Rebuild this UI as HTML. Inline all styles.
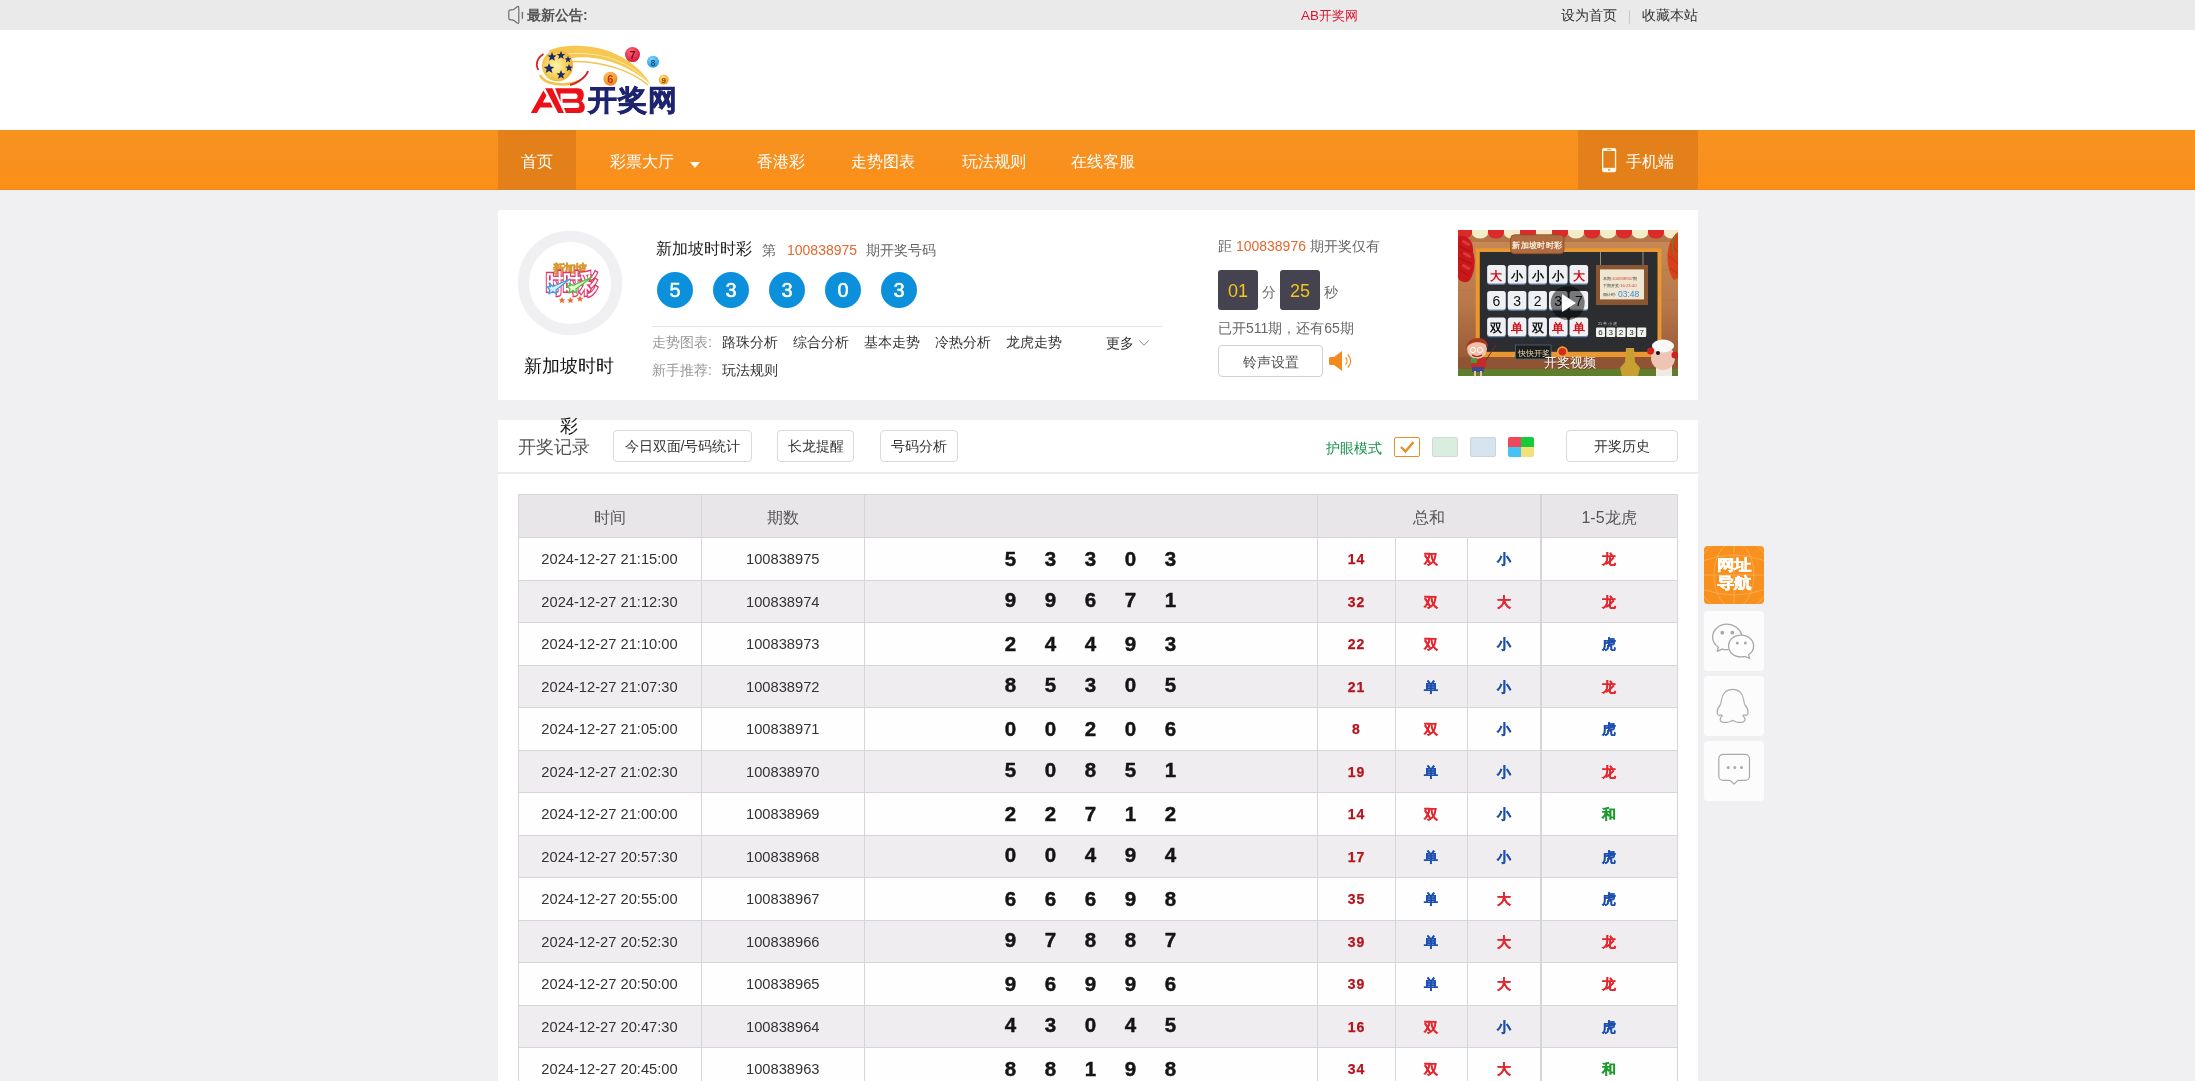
<!DOCTYPE html>
<html><head><meta charset="utf-8">
<style>
*{margin:0;padding:0;box-sizing:border-box}
html,body{width:2195px;height:1081px;overflow:hidden}
body{position:relative;background:#f0eff2;font-family:"Liberation Sans",sans-serif;color:#333;font-size:14px}
.a{position:absolute;white-space:nowrap}
.nv{color:#fff;font-size:16px;line-height:63px;top:0}
.btn{position:absolute;border:1px solid #d9d9d9;border-radius:4px;background:#fff;color:#333;text-align:center;font-size:14px}
.lbl{color:#999;font-size:14px}
.lnk{color:#333;font-size:14px}
.th{top:494px;height:43px;line-height:47px;text-align:center;font-size:16px;color:#555}
.td{height:42px;line-height:42px;text-align:center;font-size:14.7px;color:#333}
.tn{height:42px;line-height:42px;font-size:20.5px;font-weight:bold;color:#151515;width:24px;text-align:center;-webkit-text-stroke:0.45px #151515}
.ts{height:42px;line-height:42px;text-align:center;font-size:14px;font-weight:bold;-webkit-text-stroke:0.25px currentColor}
.tsn{letter-spacing:1px;text-indent:1px}
.sb{position:absolute;left:1704px;width:60px;height:60px;border-radius:4px;background:#fcfcfc}
#root{position:absolute;left:0;top:0;width:2195px;height:1081px;overflow:hidden;will-change:transform}

</style></head><body>
<div id="root">
<!-- top bar -->
<div class="a" style="left:0;top:0;width:2195px;height:30px;background:#eaeaea"></div>
<svg class="a" style="left:500px;top:1.2px" width="30" height="30" viewBox="0 0 30 30">
  <path d="M8.8 10.8 Q8.8 8.9 10.8 8.9 L12 8.9 Q13 8.9 14 8.2 L17.2 5.8 Q18.8 4.8 18.8 6.5 L18.8 21.3 Q18.8 23 17.2 22 L14 19.6 Q13 18.9 12 18.9 L10.8 18.9 Q8.8 18.9 8.8 17 Z" fill="none" stroke="#6e6e6e" stroke-width="1.2" stroke-linejoin="round"/>
  <path d="M22.4 11.3 L22.4 17.3" stroke="#6e6e6e" stroke-width="1.3" stroke-linecap="round"/>
</svg>
<div class="a" style="left:527px;top:0;line-height:30px;font-size:14px;font-weight:bold;color:#555">最新公告:</div>
<div class="a" style="left:1301px;top:0;line-height:31px;font-size:13.4px;color:#dc1430">AB开奖网</div>
<div class="a" style="left:1561px;top:0;line-height:31px;font-size:14px;color:#333">设为首页</div>
<div class="a" style="left:1629px;top:10px;width:1px;height:14px;background:#c8c8c8"></div>
<div class="a" style="left:1642px;top:0;line-height:31px;font-size:14px;color:#333">收藏本站</div>

<!-- header -->
<div class="a" style="left:0;top:30px;width:2195px;height:100px;background:#fff"></div>
<svg class="a" style="left:520px;top:35px" width="170" height="90" viewBox="0 0 170 90">
  <defs>
    <radialGradient id="gb" cx="0.45" cy="0.5" r="0.6">
      <stop offset="0" stop-color="#fff6b0"/><stop offset="0.6" stop-color="#f7cf55"/><stop offset="1" stop-color="#eaa62a"/>
    </radialGradient>
    <radialGradient id="rb" cx="0.4" cy="0.3" r="0.7"><stop offset="0" stop-color="#ff6a7a"/><stop offset="1" stop-color="#d41a3a"/></radialGradient>
    <radialGradient id="bb" cx="0.4" cy="0.3" r="0.7"><stop offset="0" stop-color="#7fd8ff"/><stop offset="1" stop-color="#1e9ee0"/></radialGradient>
    <radialGradient id="ob" cx="0.4" cy="0.3" r="0.7"><stop offset="0" stop-color="#ffc060"/><stop offset="1" stop-color="#ee8a1a"/></radialGradient>
    <radialGradient id="yb" cx="0.4" cy="0.3" r="0.7"><stop offset="0" stop-color="#ffe07a"/><stop offset="1" stop-color="#eea020"/></radialGradient>
  </defs>
  <!-- swooshes -->
  <path d="M28 16 C40 10 62 9 82 14 C104 20 122 34 131 50 C118 38 100 28 80 24 C64 21 50 22 42 26 C38 22 33 18 28 16 Z" fill="#f6c852"/>
  <path d="M44 27 C80 24 112 36 128 50" fill="none" stroke="#f3c24a" stroke-width="1.3"/><path d="M40 20 C78 14 110 26 130 49" fill="none" stroke="#fbe9a8" stroke-width="0.9"/>
  <path d="M20 40 C24 50 45 52 60 46" fill="none" stroke="#f3c24a" stroke-width="2.5"/>
  <path d="M23.5 19 C17 23 15 30 18.5 35" fill="none" stroke="#d8202a" stroke-width="1.8"/>
  <path d="M68 36 C66 42 58 48 50 50" fill="none" stroke="#d8202a" stroke-width="2"/>
  <circle cx="37.5" cy="30.8" r="15.5" fill="url(#gb)"/>
  <g fill="#1d2a6a">
    <path d="M32 17 l1.3 3.2 3.3 .2 -2.6 2.1 .9 3.3 -2.9-1.9 -2.9 1.9 .9-3.3 -2.6-2.1 3.3-.2z"/>
    <path d="M41 16 l1.2 2.9 3 .2 -2.3 1.9 .8 3 -2.7-1.7 -2.7 1.7 .8-3 -2.3-1.9 3-.2z"/>
    <path d="M48 21 l1 2.3 2.4 .2 -1.9 1.5 .7 2.4 -2.2-1.4 -2.2 1.4 .7-2.4 -1.9-1.5 2.4-.2z"/>
    <path d="M29 28 l1.5 3.6 3.8 .3 -2.9 2.4 1 3.7 -3.4-2.1 -3.3 2.1 1-3.7 -2.9-2.4 3.8-.3z"/>
    <path d="M49 29 l1.1 2.6 2.7 .2 -2.1 1.7 .7 2.7 -2.4-1.5 -2.4 1.5 .7-2.7 -2.1-1.7 2.7-.2z"/>
    <path d="M41 35 l1.3 3.2 3.3 .2 -2.6 2.1 .9 3.3 -2.9-1.9 -2.9 1.9 .9-3.3 -2.6-2.1 3.3-.2z"/>
  </g>
  <circle cx="112.5" cy="19.6" r="7.5" fill="url(#rb)"/>
  <text x="112.5" y="24" font-size="11" font-weight="bold" fill="#7a0a1a" text-anchor="middle" font-family="Liberation Sans">7</text>
  <circle cx="133" cy="26.7" r="6" fill="url(#bb)"/>
  <text x="133" y="30.5" font-size="9" font-weight="bold" fill="#0b4f8a" text-anchor="middle" font-family="Liberation Sans">8</text>
  <circle cx="90.4" cy="43.7" r="7" fill="url(#ob)"/>
  <text x="90.4" y="48" font-size="11" font-weight="bold" fill="#c02a10" text-anchor="middle" font-family="Liberation Sans">6</text>
  <circle cx="143.7" cy="44.6" r="5" fill="url(#yb)"/>
  <text x="143.7" y="48" font-size="8" font-weight="bold" fill="#8a3a00" text-anchor="middle" font-family="Liberation Sans">9</text>
  <g transform="translate(5,47) scale(0.03416)" fill="#ee1018">
    <path d="M170 910 L350 910 L440 750 L810 750 L740 600 L520 600 L630 400 L540 250 Z"/>
    <path d="M590 180 L800 180 L1140 910 L970 910 Z"/>
    <path d="M880 180 L1540 180 C1700 180 1730 300 1720 400 C1710 480 1680 540 1650 560 C1720 600 1760 680 1750 760 C1740 850 1680 910 1580 910 L1200 910 L1140 760 L1520 760 C1580 760 1590 720 1590 680 C1590 640 1570 610 1520 610 L1100 610 L1100 500 L1470 500 C1520 500 1540 470 1540 420 C1540 370 1510 340 1470 340 L1040 340 L1040 580 Z"/>
  </g>
  <text x="67.5" y="75" font-size="29" font-weight="bold" fill="#1f2470" stroke="#1f2470" stroke-width="0.7" letter-spacing="1.2">开奖网</text>
</svg>

<!-- nav -->
<div class="a" style="left:0;top:130px;width:2195px;height:60px;background:linear-gradient(#f7921f,#f8901e 50%,#fd8f16)"></div><div class="a" style="left:0;top:189px;width:2195px;height:1px;background:#e68c28"></div>
<div class="a" style="left:498px;top:130px;width:78px;height:60px;background:#e4801a"></div>
<div class="a" style="left:1578px;top:130px;width:120px;height:60px;background:#e4801a"></div>
<div class="a" style="left:0;top:130px;width:2195px;height:60px">
  <div class="a nv" style="left:521px">首页</div>
  <div class="a nv" style="left:610px">彩票大厅</div>
  <div class="a" style="left:690px;top:32px;width:0;height:0;border-left:5px solid transparent;border-right:5px solid transparent;border-top:6px solid #fff"></div>
  <div class="a nv" style="left:757px">香港彩</div>
  <div class="a nv" style="left:851px">走势图表</div>
  <div class="a nv" style="left:962px">玩法规则</div>
  <div class="a nv" style="left:1071px">在线客服</div>
  <svg class="a" style="left:1602px;top:18px" width="15" height="25" viewBox="0 0 15 25">
    <rect x="0" y="0" width="14.2" height="24.2" rx="2.2" fill="#fff8ec"/>
    <rect x="1.3" y="3" width="11.6" height="16.8" fill="#e4801a"/>
    <rect x="5" y="1.2" width="4.2" height="0.9" fill="#e4801a"/>
    <rect x="6" y="21.2" width="2.2" height="1.3" fill="#e4801a"/>
  </svg>
  <div class="a nv" style="left:1626px">手机端</div>
</div>

<!-- card 1 -->
<div class="a" style="left:498px;top:210px;width:1200px;height:190px;background:#fff"></div>
<div class="a" style="left:518px;top:230.5px;width:104px;height:104px;border-radius:50%;border:11.5px solid #f0eff2;background:#fff;box-shadow:0 0 1.5px #f0eff2"></div>
<svg class="a" style="left:540px;top:258px" width="64" height="48" viewBox="0 0 64 48">
  <text x="12.5" y="15" font-size="11.5" font-weight="bold" fill="#e6602a" stroke="#d89a30" stroke-width="0.6" letter-spacing="-0.8">新加坡</text>
  <g transform="translate(6,34) scale(0.7,1)">
    <text x="0" y="0" font-size="25" font-weight="bold" fill="#fff" stroke="#e3356a" stroke-width="3" letter-spacing="-1">时时彩</text>
    <text x="0" y="0" font-size="25" font-weight="bold" fill="#fff" letter-spacing="-1">时时彩</text>
  </g>
  <path d="M9 25 L13 28.5 L30 21 L16 32 L16.5 36 L13 33.5 L9 36 L10 32 L7 29 L10.5 28.5 Z" fill="#d8f0ff" stroke="#3aa0e8" stroke-width="1.3" stroke-linejoin="round"/>
  <path d="M29 25 L33 27.5 L52 19 L36 31 L36.5 35 L33 32.5 L29 35 L30 31 L27 28 L30.5 27.5 Z" fill="#e0ffd8" stroke="#4cc040" stroke-width="1.3" stroke-linejoin="round"/>
  <g fill="#f06a2a">
    <path d="M22 39 l1 2.2 2.3.2 -1.8 1.5 .6 2.3 -2.1-1.3 -2.1 1.3 .6-2.3 -1.8-1.5 2.3-.2z"/>
    <path d="M30.5 39 l1 2.2 2.3.2 -1.8 1.5 .6 2.3 -2.1-1.3 -2.1 1.3 .6-2.3 -1.8-1.5 2.3-.2z"/>
    <path d="M40 37.5 l1 2.2 2.3.2 -1.8 1.5 .6 2.3 -2.1-1.3 -2.1 1.3 .6-2.3 -1.8-1.5 2.3-.2z"/>
  </g>
</svg>
<div class="a" style="left:524px;top:354px;font-size:18px;line-height:24px;color:#111">新加坡时时</div>
<div class="a" style="left:560px;top:414px;font-size:18px;line-height:24px;color:#111;z-index:5">彩</div>

<div class="a" style="left:656px;top:238px;font-size:16px;line-height:22px;color:#222">新加坡时时彩</div>
<div class="a" style="left:762px;top:239px;font-size:14px;line-height:22px;color:#666">第</div>
<div class="a" style="left:787px;top:239px;font-size:14px;line-height:22px;color:#e3682e">100838975</div>
<div class="a" style="left:866px;top:239px;font-size:14px;line-height:22px;color:#666">期开奖号码</div>

<div class="a" style="left:657px;top:272px;width:36px;height:36px;border-radius:50%;background:#0c90dc;color:#fff;font-size:20px;line-height:37.5px;text-align:center;-webkit-text-stroke:0.5px #fff">5</div>
<div class="a" style="left:713px;top:272px;width:36px;height:36px;border-radius:50%;background:#0c90dc;color:#fff;font-size:20px;line-height:37.5px;text-align:center;-webkit-text-stroke:0.5px #fff">3</div>
<div class="a" style="left:769px;top:272px;width:36px;height:36px;border-radius:50%;background:#0c90dc;color:#fff;font-size:20px;line-height:37.5px;text-align:center;-webkit-text-stroke:0.5px #fff">3</div>
<div class="a" style="left:825px;top:272px;width:36px;height:36px;border-radius:50%;background:#0c90dc;color:#fff;font-size:20px;line-height:37.5px;text-align:center;-webkit-text-stroke:0.5px #fff">0</div>
<div class="a" style="left:881px;top:272px;width:36px;height:36px;border-radius:50%;background:#0c90dc;color:#fff;font-size:20px;line-height:37.5px;text-align:center;-webkit-text-stroke:0.5px #fff">3</div>

<div class="a" style="left:652px;top:326px;width:510px;height:1px;background:#e6e6e6"></div>
<div class="a lbl" style="left:652px;top:331px;line-height:22px">走势图表:</div>
<div class="a lnk" style="left:722px;top:331px;line-height:22px">路珠分析</div>
<div class="a lnk" style="left:793px;top:331px;line-height:22px">综合分析</div>
<div class="a lnk" style="left:864px;top:331px;line-height:22px">基本走势</div>
<div class="a lnk" style="left:935px;top:331px;line-height:22px">冷热分析</div>
<div class="a lnk" style="left:1006px;top:331px;line-height:22px">龙虎走势</div>
<div class="a lnk" style="left:1106px;top:332px;line-height:22px">更多</div>
<svg class="a" style="left:1138px;top:338px" width="12" height="10" viewBox="0 0 12 10"><path d="M1.2 2.3 L6 7.3 L10.8 2.3" fill="none" stroke="#8a8a8a" stroke-width="1"/></svg>
<div class="a lbl" style="left:652px;top:359px;line-height:22px">新手推荐:</div>
<div class="a lnk" style="left:722px;top:359px;line-height:22px">玩法规则</div>

<div class="a" style="left:1218px;top:235px;font-size:14px;line-height:22px;color:#666">距 <span style="color:#e3682e">100838976</span> 期开奖仅有</div>
<div class="a" style="left:1218px;top:270px;width:40px;height:40px;border-radius:3px;background:#45434f;color:#f3c521;font-size:18px;line-height:42px;text-align:center">01</div>
<div class="a" style="left:1262px;top:281px;font-size:14px;line-height:22px;color:#666">分</div>
<div class="a" style="left:1280px;top:270px;width:40px;height:40px;border-radius:3px;background:#45434f;color:#f3c521;font-size:18px;line-height:42px;text-align:center">25</div>
<div class="a" style="left:1324px;top:281px;font-size:14px;line-height:22px;color:#666">秒</div>
<div class="a" style="left:1218px;top:317px;font-size:14px;line-height:22px;color:#666">已开511期，还有65期</div>
<div class="btn" style="left:1218px;top:345px;width:105px;height:32px;line-height:32px;color:#555;border-color:#d0d0d0">铃声设置</div>
<svg class="a" style="left:1328px;top:350px" width="26" height="22" viewBox="0 0 26 22">
  <path d="M1 8.5 Q1 7 2.5 7 L6 7 L14 1 L14 21 L6 15 L2.5 15 Q1 15 1 13.5 Z" fill="#f48a1e"/>
  <path d="M17.5 7.5 C19.5 9.5 19.5 12.5 17.5 14.5" fill="none" stroke="#f48a1e" stroke-width="1.3"/>
  <path d="M19.8 4.5 C23.5 8.5 23.5 13.5 19.8 17.5" fill="none" stroke="#f48a1e" stroke-width="1.3"/>
</svg>

<!-- video thumb -->
<svg class="a" style="left:1458px;top:230px" width="220" height="146" viewBox="0 0 220 146">
  <defs>
    <linearGradient id="wood" x1="0" y1="0" x2="0" y2="1"><stop offset="0" stop-color="#c88c58"/><stop offset="0.5" stop-color="#b8784a"/><stop offset="1" stop-color="#8e5232"/></linearGradient>
  </defs>
  <rect width="220" height="146" fill="url(#wood)"/>
  <g stroke="#a86a40" stroke-width="0.6" opacity="0.6">
    <line x1="0" y1="30" x2="18" y2="30"/><line x1="0" y1="60" x2="18" y2="60"/><line x1="0" y1="90" x2="18" y2="90"/>
    <line x1="203" y1="40" x2="220" y2="40"/><line x1="203" y1="70" x2="220" y2="70"/><line x1="203" y1="100" x2="220" y2="100"/>
  </g>
  <rect x="0" y="6" width="220" height="6" fill="#a8683e" opacity="0.6"/>
  <path d="M-2 0 h16 v3 a8 5.5 0 0 1 -16 0z" fill="#dc2a2a"/>
  <path d="M14 0 h16 v3 a8 5.5 0 0 1 -16 0z" fill="#f4ecc8"/>
  <path d="M30 0 h16 v3 a8 5.5 0 0 1 -16 0z" fill="#dc2a2a"/>
  <path d="M46 0 h16 v3 a8 5.5 0 0 1 -16 0z" fill="#f4ecc8"/>
  <path d="M62 0 h16 v3 a8 5.5 0 0 1 -16 0z" fill="#dc2a2a"/>
  <path d="M78 0 h16 v3 a8 5.5 0 0 1 -16 0z" fill="#f4ecc8"/>
  <path d="M94 0 h16 v3 a8 5.5 0 0 1 -16 0z" fill="#dc2a2a"/>
  <path d="M110 0 h16 v3 a8 5.5 0 0 1 -16 0z" fill="#f4ecc8"/>
  <path d="M126 0 h16 v3 a8 5.5 0 0 1 -16 0z" fill="#dc2a2a"/>
  <path d="M142 0 h16 v3 a8 5.5 0 0 1 -16 0z" fill="#f4ecc8"/>
  <path d="M158 0 h16 v3 a8 5.5 0 0 1 -16 0z" fill="#dc2a2a"/>
  <path d="M174 0 h16 v3 a8 5.5 0 0 1 -16 0z" fill="#f4ecc8"/>
  <path d="M190 0 h16 v3 a8 5.5 0 0 1 -16 0z" fill="#dc2a2a"/>
  <path d="M206 0 h16 v3 a8 5.5 0 0 1 -16 0z" fill="#f4ecc8"/>
  <path d="M222 0 h16 v3 a8 5.5 0 0 1 -16 0z" fill="#dc2a2a"/>
  <path d="M238 0 h16 v3 a8 5.5 0 0 1 -16 0z" fill="#f4ecc8"/>
  <path d="M0 6 C10 4 16 12 15 22 C18 30 17 42 12 50 C8 54 2 52 0 48 Z" fill="#c8181c"/>
  <g stroke="#8a0a10" stroke-width="0.7" fill="none" opacity="0.8">
    <path d="M2 10 L12 16"/><path d="M1 16 L13 22"/><path d="M2 22 L14 28"/><path d="M1 28 L14 34"/><path d="M2 34 L13 40"/><path d="M2 40 L11 46"/>
  </g>
  <g fill="#e8383a" opacity="0.9">
    <ellipse cx="8" cy="13" rx="5" ry="1.6" transform="rotate(30 8 13)"/><ellipse cx="9" cy="25" rx="5" ry="1.6" transform="rotate(30 9 25)"/><ellipse cx="8" cy="37" rx="5" ry="1.6" transform="rotate(30 8 37)"/>
  </g>
  <path d="M220 2 C212 8 208 20 210 34 C211 42 214 48 216 50 L220 48 Z" fill="#d8401c"/>
  <g stroke="#8a2a0a" stroke-width="0.6" opacity="0.7"><path d="M212 14 L220 22"/><path d="M211 26 L220 34"/><path d="M212 38 L220 44"/></g>
  <path d="M218 4 L214 14 L216 24" stroke="#5a8a2a" stroke-width="1.2" fill="none"/>
  <rect x="17.7" y="18.3" width="185.7" height="108.7" fill="#e8982e"/>
  <rect x="21.8" y="22" width="177.7" height="99.8" fill="#2b2d31"/>
  <rect x="52.6" y="4.8" width="53.4" height="18.9" rx="4" fill="#b06c40" stroke="#8a4a28" stroke-width="0.8"/>
  <text x="79.3" y="17.8" font-size="8.2" font-weight="bold" fill="#fbefdc" text-anchor="middle" letter-spacing="0.3">新加坡时时彩</text>
  <rect x="29.2" y="35.8" width="18.5" height="19" rx="2.5" fill="#6a8ab0"/>
  <rect x="29.2" y="35" width="18.5" height="18.5" rx="2.5" fill="#eef0f3"/>
  <text x="38.45" y="49.5" font-size="12" font-weight="bold" fill="#d01018" text-anchor="middle" >大</text>
  <rect x="29.2" y="61.8" width="18.5" height="19" rx="2.5" fill="#6a8ab0"/>
  <rect x="29.2" y="61" width="18.5" height="18.5" rx="2.5" fill="#eef0f3"/>
  <text x="38.45" y="75.5" font-size="14" font-weight="normal" fill="#111" text-anchor="middle" font-family="Liberation Sans">6</text>
  <rect x="29.2" y="88.2" width="18.5" height="19" rx="2.5" fill="#6a8ab0"/>
  <rect x="29.2" y="87.4" width="18.5" height="18.5" rx="2.5" fill="#eef0f3"/>
  <text x="38.45" y="101.9" font-size="12" font-weight="bold" fill="#111" text-anchor="middle" >双</text>
  <rect x="49.8" y="35.8" width="18.5" height="19" rx="2.5" fill="#6a8ab0"/>
  <rect x="49.8" y="35" width="18.5" height="18.5" rx="2.5" fill="#eef0f3"/>
  <text x="59.05" y="49.5" font-size="12" font-weight="bold" fill="#111" text-anchor="middle" >小</text>
  <rect x="49.8" y="61.8" width="18.5" height="19" rx="2.5" fill="#6a8ab0"/>
  <rect x="49.8" y="61" width="18.5" height="18.5" rx="2.5" fill="#eef0f3"/>
  <text x="59.05" y="75.5" font-size="14" font-weight="normal" fill="#111" text-anchor="middle" font-family="Liberation Sans">3</text>
  <rect x="49.8" y="88.2" width="18.5" height="19" rx="2.5" fill="#6a8ab0"/>
  <rect x="49.8" y="87.4" width="18.5" height="18.5" rx="2.5" fill="#eef0f3"/>
  <text x="59.05" y="101.9" font-size="12" font-weight="bold" fill="#d01018" text-anchor="middle" >单</text>
  <rect x="70.4" y="35.8" width="18.5" height="19" rx="2.5" fill="#6a8ab0"/>
  <rect x="70.4" y="35" width="18.5" height="18.5" rx="2.5" fill="#eef0f3"/>
  <text x="79.65" y="49.5" font-size="12" font-weight="bold" fill="#111" text-anchor="middle" >小</text>
  <rect x="70.4" y="61.8" width="18.5" height="19" rx="2.5" fill="#6a8ab0"/>
  <rect x="70.4" y="61" width="18.5" height="18.5" rx="2.5" fill="#eef0f3"/>
  <text x="79.65" y="75.5" font-size="14" font-weight="normal" fill="#111" text-anchor="middle" font-family="Liberation Sans">2</text>
  <rect x="70.4" y="88.2" width="18.5" height="19" rx="2.5" fill="#6a8ab0"/>
  <rect x="70.4" y="87.4" width="18.5" height="18.5" rx="2.5" fill="#eef0f3"/>
  <text x="79.65" y="101.9" font-size="12" font-weight="bold" fill="#111" text-anchor="middle" >双</text>
  <rect x="91" y="35.8" width="18.5" height="19" rx="2.5" fill="#6a8ab0"/>
  <rect x="91" y="35" width="18.5" height="18.5" rx="2.5" fill="#eef0f3"/>
  <text x="100.25" y="49.5" font-size="12" font-weight="bold" fill="#111" text-anchor="middle" >小</text>
  <rect x="91" y="61.8" width="18.5" height="19" rx="2.5" fill="#6a8ab0"/>
  <rect x="91" y="61" width="18.5" height="18.5" rx="2.5" fill="#eef0f3"/>
  <text x="100.25" y="75.5" font-size="14" font-weight="normal" fill="#111" text-anchor="middle" font-family="Liberation Sans">3</text>
  <rect x="91" y="88.2" width="18.5" height="19" rx="2.5" fill="#6a8ab0"/>
  <rect x="91" y="87.4" width="18.5" height="18.5" rx="2.5" fill="#eef0f3"/>
  <text x="100.25" y="101.9" font-size="12" font-weight="bold" fill="#d01018" text-anchor="middle" >单</text>
  <rect x="111.6" y="35.8" width="18.5" height="19" rx="2.5" fill="#6a8ab0"/>
  <rect x="111.6" y="35" width="18.5" height="18.5" rx="2.5" fill="#eef0f3"/>
  <text x="120.85" y="49.5" font-size="12" font-weight="bold" fill="#d01018" text-anchor="middle" >大</text>
  <rect x="111.6" y="61.8" width="18.5" height="19" rx="2.5" fill="#6a8ab0"/>
  <rect x="111.6" y="61" width="18.5" height="18.5" rx="2.5" fill="#eef0f3"/>
  <text x="120.85" y="75.5" font-size="14" font-weight="normal" fill="#111" text-anchor="middle" font-family="Liberation Sans">7</text>
  <rect x="111.6" y="88.2" width="18.5" height="19" rx="2.5" fill="#6a8ab0"/>
  <rect x="111.6" y="87.4" width="18.5" height="18.5" rx="2.5" fill="#eef0f3"/>
  <text x="120.85" y="101.9" font-size="12" font-weight="bold" fill="#d01018" text-anchor="middle" >单</text>
  <line x1="142.5" y1="22" x2="142.5" y2="36" stroke="#b8a888" stroke-width="0.8"/>
  <line x1="185" y1="22" x2="185" y2="36" stroke="#b8a888" stroke-width="0.8"/>
  <rect x="138" y="35" width="52" height="40" fill="#8a5632"/>
  <rect x="142" y="39.4" width="44" height="30" fill="#efe6d2"/>
  <text x="145" y="50" font-size="4.2" fill="#333">本期:<tspan fill="#e04040">100838947</tspan>期</text>
  <text x="145" y="57" font-size="4.2" fill="#333">下期开奖:<tspan fill="#e04040">16:23:40</tspan></text>
  <text x="145" y="66" font-size="4" fill="#333">倒计时:</text>
  <text x="160" y="66.5" font-size="8.5" fill="#3a8ad8" font-family="Liberation Sans">03:48</text>
  <text x="140" y="94.5" font-size="3.8" fill="#ccc">21 单 小 虎</text>
  <rect x="138.0" y="97.4" width="9" height="9.6" rx="1" fill="#f2f2ee"/><text x="142.5" y="105.3" font-size="8" fill="#222" text-anchor="middle" font-family="Liberation Sans">6</text>
  <rect x="148.3" y="97.4" width="9" height="9.6" rx="1" fill="#f2f2ee"/><text x="152.8" y="105.3" font-size="8" fill="#222" text-anchor="middle" font-family="Liberation Sans">3</text>
  <rect x="158.6" y="97.4" width="9" height="9.6" rx="1" fill="#f2f2ee"/><text x="163.1" y="105.3" font-size="8" fill="#222" text-anchor="middle" font-family="Liberation Sans">2</text>
  <rect x="168.9" y="97.4" width="9" height="9.6" rx="1" fill="#f2f2ee"/><text x="173.4" y="105.3" font-size="8" fill="#222" text-anchor="middle" font-family="Liberation Sans">3</text>
  <rect x="179.2" y="97.4" width="9" height="9.6" rx="1" fill="#f2f2ee"/><text x="183.7" y="105.3" font-size="8" fill="#222" text-anchor="middle" font-family="Liberation Sans">7</text>
  <circle cx="109.7" cy="73" r="17" fill="#000" fill-opacity="0.5"/>
  <path d="M104 64 L118 73 L104 82 Z" fill="#fff"/>
  <rect x="0" y="127" width="220" height="12" fill="#8e5434"/>
  <rect x="0" y="139" width="220" height="7" fill="#5e7e2c"/>
  <rect x="57.4" y="115" width="35.6" height="14" fill="#1e1e1e" stroke="#4a6a80" stroke-width="0.8"/>
  <text x="60" y="125.5" font-size="7.5" fill="#e8d8b0">快快开奖</text>
  <circle cx="104.4" cy="121.8" r="5.5" fill="#e8a040"/><circle cx="104.4" cy="121.8" r="3.8" fill="#d82a1a"/>
  <!-- girl -->
  <rect x="13" y="128" width="15" height="10" rx="3" fill="#c82a2a"/>
  <rect x="14" y="137" width="12" height="5" fill="#3a4a8a"/>
  <rect x="16" y="141" width="2" height="5" fill="#e8c0a0"/><rect x="22" y="141" width="2" height="5" fill="#e8c0a0"/>
  <circle cx="19" cy="119" r="10" fill="#f0c0a8"/>
  <path d="M8.5 118 C8 106 30 104 30 117 C27 111 12 110 8.5 118 Z" fill="#a83a1a"/>
  <circle cx="15" cy="120" r="2.6" fill="none" stroke="#fff" stroke-width="0.9"/><circle cx="22" cy="120" r="2.6" fill="none" stroke="#fff" stroke-width="0.9"/>
  <path d="M14 125 Q19 128 24 125" stroke="#8a1a1a" stroke-width="1.2" fill="none"/>
  <line x1="28" y1="130" x2="38" y2="115" stroke="#7a2a1a" stroke-width="1"/>
  <rect x="13" y="128" width="6" height="5" fill="#4a9a3a"/>
  <!-- statue -->
  <path d="M168 118 L176 118 L177 132 L182 138 L180 146 L164 146 L162 138 L167 132 Z" fill="#c8a032"/>
  <!-- chef -->
  <rect x="198" y="132" width="16" height="14" fill="#f0ebe0"/>
  <circle cx="205" cy="128" r="12" fill="#eec4b4"/>
  <ellipse cx="205" cy="116" rx="11" ry="6.5" fill="#f8f8f8"/>
  <circle cx="192.5" cy="121" r="3.5" fill="#d02020"/><circle cx="217" cy="125" r="3.5" fill="#d02020"/>
  <circle cx="200" cy="123" r="2" fill="#111"/>
  <text x="86" y="137.5" font-size="13" fill="#3a2010" opacity="0.5">开奖视频</text><text x="85.5" y="136.8" font-size="13" fill="#fff">开奖视频</text>
</svg>

<!-- card 2 -->
<div class="a" style="left:498px;top:420px;width:1200px;height:700px;background:#fff"></div>
<div class="a" style="left:498px;top:472px;width:1200px;height:2px;background:#ebebeb"></div>
<div class="a" style="left:518px;top:435px;font-size:18px;line-height:24px;color:#555">开奖记录</div>
<div class="btn" style="left:613px;top:430px;width:139px;height:32px;line-height:31px">今日双面/号码统计</div>
<div class="btn" style="left:777px;top:430px;width:77px;height:32px;line-height:31px">长龙提醒</div>
<div class="btn" style="left:880px;top:430px;width:78px;height:32px;line-height:31px">号码分析</div>
<div class="a" style="left:1326px;top:437px;font-size:14px;line-height:22px;color:#17904a">护眼模式</div>
<div class="a" style="left:1394px;top:437px;width:26px;height:20px;border:1px solid #e2902a;border-radius:2px;background:#fff"></div>
<svg class="a" style="left:1398px;top:439px" width="18" height="16" viewBox="0 0 18 16"><path d="M3 8 L7.5 12.5 L15.5 3" fill="none" stroke="#e2902a" stroke-width="2.4"/></svg>
<div class="a" style="left:1432px;top:437px;width:26px;height:20px;border:1px solid #d2d8d4;border-radius:2px;background:#d9eedf"></div>
<div class="a" style="left:1470px;top:437px;width:26px;height:20px;border:1px solid #ccd4da;border-radius:2px;background:#d5e4ef"></div>
<div class="a" style="left:1508px;top:437px;width:26px;height:20px;border-radius:2px;overflow:hidden">
  <div class="a" style="left:0;top:0;width:13px;height:10px;background:#f0485a"></div>
  <div class="a" style="left:13px;top:0;width:13px;height:10px;background:#16cc3a"></div>
  <div class="a" style="left:0;top:10px;width:13px;height:10px;background:#45c3f5"></div>
  <div class="a" style="left:13px;top:10px;width:13px;height:10px;background:#f4e07a"></div>
</div>
<div class="btn" style="left:1566px;top:430px;width:112px;height:32px;line-height:30px">开奖历史</div>

<!-- sidebar -->
<div class="sb" style="top:546px;height:58px;background:linear-gradient(135deg,#f98f1c,#f7921e);overflow:hidden">
  <svg class="a" style="left:0;top:0" width="60" height="58" viewBox="0 0 60 58">
    <g fill="none" stroke="#fcb565" stroke-width="0.9" opacity="0.75">
      <circle cx="30" cy="29" r="37"/><ellipse cx="30" cy="29" rx="20" ry="33"/>
      <line x1="0" y1="29" x2="60" y2="29"/><line x1="30" y1="0" x2="30" y2="58"/>
      <path d="M-2 15 Q30 3 62 15"/><path d="M-2 43 Q30 55 62 43"/>
    </g>
  </svg>
  <div class="a" style="left:13px;top:11px;font-size:17px;line-height:17px;font-weight:bold;color:#fff;transform:scaleY(0.86);transform-origin:0 50%;-webkit-text-stroke:0.5px #fff">网址</div>
  <div class="a" style="left:13px;top:28.5px;font-size:17px;line-height:17px;font-weight:bold;color:#fff;transform:scaleY(0.86);transform-origin:0 50%;-webkit-text-stroke:0.5px #fff">导航</div>
</div>
<div class="sb" style="top:611px">
  <svg class="a" style="left:0;top:0" width="60" height="60" viewBox="0 0 60 60">
    <path d="M37.8 24 C36 17.5 30 13.2 23 13.2 C15 13.2 8.6 19 8.6 26.2 C8.6 30.5 10.8 33.6 14.4 36.2 L13.2 40.4 L17.8 38.1 C19.8 38.5 22.2 38.7 24.8 38.6" fill="none" stroke="#a8a8a8" stroke-width="1.3" stroke-linejoin="round"/>
    <path d="M37 24.2 C44 24.2 49.6 29 49.6 35 C49.6 38.8 47.6 41.8 44.6 43.8 L45.6 47.4 L41.2 45.5 C39.9 45.8 38.5 45.9 37 45.9 C30 45.9 24.6 41 24.6 35 C24.6 29 30 24.2 37 24.2 Z" fill="#fff" stroke="#a8a8a8" stroke-width="1.3" stroke-linejoin="round"/>
    <circle cx="18.3" cy="21.7" r="1.9" fill="#a8a8a8"/><circle cx="28.3" cy="21.7" r="1.9" fill="#a8a8a8"/>
    <circle cx="33.3" cy="32" r="1.5" fill="#a8a8a8"/><circle cx="41.4" cy="32" r="1.5" fill="#a8a8a8"/>
  </svg>
</div>
<div class="sb" style="top:676px">
  <svg class="a" style="left:0;top:0" width="60" height="60" viewBox="0 0 60 60">
    <path d="M28.6 13.3 C22 13.3 18.2 18 17.6 23.5 C17.2 26.5 17 27.5 16.2 29 C14 31.5 13 34 13.2 37 C13.3 39.5 15.5 40 17 38.8 L18.4 39.8 C16.8 41 15.8 42.5 16.3 44.2 C17 46 20 46.6 23 46.4 C25.5 46.2 27 45 28.6 44.4 C30.2 45 31.7 46.2 34.2 46.4 C37.2 46.6 40.2 46 40.9 44.2 C41.4 42.5 40.4 41 38.8 39.8 L40.2 38.8 C41.7 40 43.9 39.5 44 37 C44.2 34 43.2 31.5 41 29 C40.2 27.5 40 26.5 39.6 23.5 C39 18 35.2 13.3 28.6 13.3 Z" fill="none" stroke="#adadad" stroke-width="1.2" stroke-linejoin="round"/>
  </svg>
</div>
<div class="sb" style="top:741px">
  <svg class="a" style="left:0;top:0" width="60" height="60" viewBox="0 0 60 60">
    <path d="M19.2 13.4 H41.1 A4.4 4.4 0 0 1 45.5 17.8 V35 A4.4 4.4 0 0 1 41.1 39.4 H33.9 L30 43 L26.1 39.4 H19.2 A4.4 4.4 0 0 1 14.8 35 V17.8 A4.4 4.4 0 0 1 19.2 13.4 Z" fill="none" stroke="#aaa" stroke-width="1.2" stroke-linejoin="round"/>
    <circle cx="24.2" cy="26.4" r="1.5" fill="#aaa"/><circle cx="30.8" cy="26.4" r="1.5" fill="#aaa"/><circle cx="37.5" cy="26.4" r="1.5" fill="#aaa"/>
  </svg>
</div>

<div class="a" style="left:518px;top:494px;width:1159.5px;height:43px;background:#e8e6e9"></div>
<div class="a" style="left:518px;top:537px;width:1159.5px;height:43px;background:#fefefe"></div>
<div class="a" style="left:518px;top:580px;width:1159.5px;height:42px;background:#efedef"></div>
<div class="a" style="left:518px;top:622px;width:1159.5px;height:43px;background:#fefefe"></div>
<div class="a" style="left:518px;top:665px;width:1159.5px;height:42px;background:#efedef"></div>
<div class="a" style="left:518px;top:707px;width:1159.5px;height:43px;background:#fefefe"></div>
<div class="a" style="left:518px;top:750px;width:1159.5px;height:42px;background:#efedef"></div>
<div class="a" style="left:518px;top:792px;width:1159.5px;height:43px;background:#fefefe"></div>
<div class="a" style="left:518px;top:835px;width:1159.5px;height:42px;background:#efedef"></div>
<div class="a" style="left:518px;top:877px;width:1159.5px;height:43px;background:#fefefe"></div>
<div class="a" style="left:518px;top:920px;width:1159.5px;height:42px;background:#efedef"></div>
<div class="a" style="left:518px;top:962px;width:1159.5px;height:43px;background:#fefefe"></div>
<div class="a" style="left:518px;top:1005px;width:1159.5px;height:42px;background:#efedef"></div>
<div class="a" style="left:518px;top:1047px;width:1159.5px;height:43px;background:#fefefe"></div>
<div class="a th" style="left:518px;width:183px">时间</div>
<div class="a th" style="left:701px;width:163.5px">期数</div>
<div class="a th" style="left:1317px;width:223.5px">总和</div>
<div class="a th" style="left:1540.5px;width:137.0px">1-5龙虎</div>
<div class="a td" style="left:518px;top:538.0px;width:183px">2024-12-27 21:15:00</div>
<div class="a td" style="left:701px;top:538.0px;width:163.5px">100838975</div>
<div class="a tn" style="left:998.5px;top:538.0px">5</div>
<div class="a tn" style="left:1038.5px;top:538.0px">3</div>
<div class="a tn" style="left:1078.5px;top:538.0px">3</div>
<div class="a tn" style="left:1118.5px;top:538.0px">0</div>
<div class="a tn" style="left:1158.5px;top:538.0px">3</div>
<div class="a ts tsn" style="left:1317px;top:538.0px;width:78px;color:#b5141c">14</div>
<div class="a ts" style="left:1395px;top:538.0px;width:72px;color:#e4262e">双</div>
<div class="a ts" style="left:1467px;top:538.0px;width:73.5px;color:#1c4fb0">小</div>
<div class="a ts" style="left:1540.5px;top:538.0px;width:137.0px;color:#e4262e">龙</div>
<div class="a td" style="left:518px;top:580.5px;width:183px">2024-12-27 21:12:30</div>
<div class="a td" style="left:701px;top:580.5px;width:163.5px">100838974</div>
<div class="a tn" style="left:998.5px;top:579.0px">9</div>
<div class="a tn" style="left:1038.5px;top:579.0px">9</div>
<div class="a tn" style="left:1078.5px;top:579.0px">6</div>
<div class="a tn" style="left:1118.5px;top:579.0px">7</div>
<div class="a tn" style="left:1158.5px;top:579.0px">1</div>
<div class="a ts tsn" style="left:1317px;top:580.5px;width:78px;color:#b5141c">32</div>
<div class="a ts" style="left:1395px;top:580.5px;width:72px;color:#e4262e">双</div>
<div class="a ts" style="left:1467px;top:580.5px;width:73.5px;color:#e4262e">大</div>
<div class="a ts" style="left:1540.5px;top:580.5px;width:137.0px;color:#e4262e">龙</div>
<div class="a td" style="left:518px;top:623.0px;width:183px">2024-12-27 21:10:00</div>
<div class="a td" style="left:701px;top:623.0px;width:163.5px">100838973</div>
<div class="a tn" style="left:998.5px;top:623.0px">2</div>
<div class="a tn" style="left:1038.5px;top:623.0px">4</div>
<div class="a tn" style="left:1078.5px;top:623.0px">4</div>
<div class="a tn" style="left:1118.5px;top:623.0px">9</div>
<div class="a tn" style="left:1158.5px;top:623.0px">3</div>
<div class="a ts tsn" style="left:1317px;top:623.0px;width:78px;color:#b5141c">22</div>
<div class="a ts" style="left:1395px;top:623.0px;width:72px;color:#e4262e">双</div>
<div class="a ts" style="left:1467px;top:623.0px;width:73.5px;color:#1c4fb0">小</div>
<div class="a ts" style="left:1540.5px;top:623.0px;width:137.0px;color:#1c4fb0">虎</div>
<div class="a td" style="left:518px;top:665.5px;width:183px">2024-12-27 21:07:30</div>
<div class="a td" style="left:701px;top:665.5px;width:163.5px">100838972</div>
<div class="a tn" style="left:998.5px;top:664.0px">8</div>
<div class="a tn" style="left:1038.5px;top:664.0px">5</div>
<div class="a tn" style="left:1078.5px;top:664.0px">3</div>
<div class="a tn" style="left:1118.5px;top:664.0px">0</div>
<div class="a tn" style="left:1158.5px;top:664.0px">5</div>
<div class="a ts tsn" style="left:1317px;top:665.5px;width:78px;color:#b5141c">21</div>
<div class="a ts" style="left:1395px;top:665.5px;width:72px;color:#1c4fb0">单</div>
<div class="a ts" style="left:1467px;top:665.5px;width:73.5px;color:#1c4fb0">小</div>
<div class="a ts" style="left:1540.5px;top:665.5px;width:137.0px;color:#e4262e">龙</div>
<div class="a td" style="left:518px;top:708.0px;width:183px">2024-12-27 21:05:00</div>
<div class="a td" style="left:701px;top:708.0px;width:163.5px">100838971</div>
<div class="a tn" style="left:998.5px;top:708.0px">0</div>
<div class="a tn" style="left:1038.5px;top:708.0px">0</div>
<div class="a tn" style="left:1078.5px;top:708.0px">2</div>
<div class="a tn" style="left:1118.5px;top:708.0px">0</div>
<div class="a tn" style="left:1158.5px;top:708.0px">6</div>
<div class="a ts tsn" style="left:1317px;top:708.0px;width:78px;color:#b5141c">8</div>
<div class="a ts" style="left:1395px;top:708.0px;width:72px;color:#e4262e">双</div>
<div class="a ts" style="left:1467px;top:708.0px;width:73.5px;color:#1c4fb0">小</div>
<div class="a ts" style="left:1540.5px;top:708.0px;width:137.0px;color:#1c4fb0">虎</div>
<div class="a td" style="left:518px;top:750.5px;width:183px">2024-12-27 21:02:30</div>
<div class="a td" style="left:701px;top:750.5px;width:163.5px">100838970</div>
<div class="a tn" style="left:998.5px;top:749.0px">5</div>
<div class="a tn" style="left:1038.5px;top:749.0px">0</div>
<div class="a tn" style="left:1078.5px;top:749.0px">8</div>
<div class="a tn" style="left:1118.5px;top:749.0px">5</div>
<div class="a tn" style="left:1158.5px;top:749.0px">1</div>
<div class="a ts tsn" style="left:1317px;top:750.5px;width:78px;color:#b5141c">19</div>
<div class="a ts" style="left:1395px;top:750.5px;width:72px;color:#1c4fb0">单</div>
<div class="a ts" style="left:1467px;top:750.5px;width:73.5px;color:#1c4fb0">小</div>
<div class="a ts" style="left:1540.5px;top:750.5px;width:137.0px;color:#e4262e">龙</div>
<div class="a td" style="left:518px;top:793.0px;width:183px">2024-12-27 21:00:00</div>
<div class="a td" style="left:701px;top:793.0px;width:163.5px">100838969</div>
<div class="a tn" style="left:998.5px;top:793.0px">2</div>
<div class="a tn" style="left:1038.5px;top:793.0px">2</div>
<div class="a tn" style="left:1078.5px;top:793.0px">7</div>
<div class="a tn" style="left:1118.5px;top:793.0px">1</div>
<div class="a tn" style="left:1158.5px;top:793.0px">2</div>
<div class="a ts tsn" style="left:1317px;top:793.0px;width:78px;color:#b5141c">14</div>
<div class="a ts" style="left:1395px;top:793.0px;width:72px;color:#e4262e">双</div>
<div class="a ts" style="left:1467px;top:793.0px;width:73.5px;color:#1c4fb0">小</div>
<div class="a ts" style="left:1540.5px;top:793.0px;width:137.0px;color:#1a9a2a">和</div>
<div class="a td" style="left:518px;top:835.5px;width:183px">2024-12-27 20:57:30</div>
<div class="a td" style="left:701px;top:835.5px;width:163.5px">100838968</div>
<div class="a tn" style="left:998.5px;top:834.0px">0</div>
<div class="a tn" style="left:1038.5px;top:834.0px">0</div>
<div class="a tn" style="left:1078.5px;top:834.0px">4</div>
<div class="a tn" style="left:1118.5px;top:834.0px">9</div>
<div class="a tn" style="left:1158.5px;top:834.0px">4</div>
<div class="a ts tsn" style="left:1317px;top:835.5px;width:78px;color:#b5141c">17</div>
<div class="a ts" style="left:1395px;top:835.5px;width:72px;color:#1c4fb0">单</div>
<div class="a ts" style="left:1467px;top:835.5px;width:73.5px;color:#1c4fb0">小</div>
<div class="a ts" style="left:1540.5px;top:835.5px;width:137.0px;color:#1c4fb0">虎</div>
<div class="a td" style="left:518px;top:878.0px;width:183px">2024-12-27 20:55:00</div>
<div class="a td" style="left:701px;top:878.0px;width:163.5px">100838967</div>
<div class="a tn" style="left:998.5px;top:878.0px">6</div>
<div class="a tn" style="left:1038.5px;top:878.0px">6</div>
<div class="a tn" style="left:1078.5px;top:878.0px">6</div>
<div class="a tn" style="left:1118.5px;top:878.0px">9</div>
<div class="a tn" style="left:1158.5px;top:878.0px">8</div>
<div class="a ts tsn" style="left:1317px;top:878.0px;width:78px;color:#b5141c">35</div>
<div class="a ts" style="left:1395px;top:878.0px;width:72px;color:#1c4fb0">单</div>
<div class="a ts" style="left:1467px;top:878.0px;width:73.5px;color:#e4262e">大</div>
<div class="a ts" style="left:1540.5px;top:878.0px;width:137.0px;color:#1c4fb0">虎</div>
<div class="a td" style="left:518px;top:920.5px;width:183px">2024-12-27 20:52:30</div>
<div class="a td" style="left:701px;top:920.5px;width:163.5px">100838966</div>
<div class="a tn" style="left:998.5px;top:919.0px">9</div>
<div class="a tn" style="left:1038.5px;top:919.0px">7</div>
<div class="a tn" style="left:1078.5px;top:919.0px">8</div>
<div class="a tn" style="left:1118.5px;top:919.0px">8</div>
<div class="a tn" style="left:1158.5px;top:919.0px">7</div>
<div class="a ts tsn" style="left:1317px;top:920.5px;width:78px;color:#b5141c">39</div>
<div class="a ts" style="left:1395px;top:920.5px;width:72px;color:#1c4fb0">单</div>
<div class="a ts" style="left:1467px;top:920.5px;width:73.5px;color:#e4262e">大</div>
<div class="a ts" style="left:1540.5px;top:920.5px;width:137.0px;color:#e4262e">龙</div>
<div class="a td" style="left:518px;top:963.0px;width:183px">2024-12-27 20:50:00</div>
<div class="a td" style="left:701px;top:963.0px;width:163.5px">100838965</div>
<div class="a tn" style="left:998.5px;top:963.0px">9</div>
<div class="a tn" style="left:1038.5px;top:963.0px">6</div>
<div class="a tn" style="left:1078.5px;top:963.0px">9</div>
<div class="a tn" style="left:1118.5px;top:963.0px">9</div>
<div class="a tn" style="left:1158.5px;top:963.0px">6</div>
<div class="a ts tsn" style="left:1317px;top:963.0px;width:78px;color:#b5141c">39</div>
<div class="a ts" style="left:1395px;top:963.0px;width:72px;color:#1c4fb0">单</div>
<div class="a ts" style="left:1467px;top:963.0px;width:73.5px;color:#e4262e">大</div>
<div class="a ts" style="left:1540.5px;top:963.0px;width:137.0px;color:#e4262e">龙</div>
<div class="a td" style="left:518px;top:1005.5px;width:183px">2024-12-27 20:47:30</div>
<div class="a td" style="left:701px;top:1005.5px;width:163.5px">100838964</div>
<div class="a tn" style="left:998.5px;top:1004.0px">4</div>
<div class="a tn" style="left:1038.5px;top:1004.0px">3</div>
<div class="a tn" style="left:1078.5px;top:1004.0px">0</div>
<div class="a tn" style="left:1118.5px;top:1004.0px">4</div>
<div class="a tn" style="left:1158.5px;top:1004.0px">5</div>
<div class="a ts tsn" style="left:1317px;top:1005.5px;width:78px;color:#b5141c">16</div>
<div class="a ts" style="left:1395px;top:1005.5px;width:72px;color:#e4262e">双</div>
<div class="a ts" style="left:1467px;top:1005.5px;width:73.5px;color:#1c4fb0">小</div>
<div class="a ts" style="left:1540.5px;top:1005.5px;width:137.0px;color:#1c4fb0">虎</div>
<div class="a td" style="left:518px;top:1048.0px;width:183px">2024-12-27 20:45:00</div>
<div class="a td" style="left:701px;top:1048.0px;width:163.5px">100838963</div>
<div class="a tn" style="left:998.5px;top:1048.0px">8</div>
<div class="a tn" style="left:1038.5px;top:1048.0px">8</div>
<div class="a tn" style="left:1078.5px;top:1048.0px">1</div>
<div class="a tn" style="left:1118.5px;top:1048.0px">9</div>
<div class="a tn" style="left:1158.5px;top:1048.0px">8</div>
<div class="a ts tsn" style="left:1317px;top:1048.0px;width:78px;color:#b5141c">34</div>
<div class="a ts" style="left:1395px;top:1048.0px;width:72px;color:#e4262e">双</div>
<div class="a ts" style="left:1467px;top:1048.0px;width:73.5px;color:#e4262e">大</div>
<div class="a ts" style="left:1540.5px;top:1048.0px;width:137.0px;color:#1a9a2a">和</div>
<div class="a" style="left:518px;top:494px;width:1159.5px;height:1px;background:#d6d5d7"></div>
<div class="a" style="left:518px;top:537px;width:1159.5px;height:1px;background:#d6d5d7"></div>
<div class="a" style="left:518px;top:580px;width:1159.5px;height:1px;background:#d6d5d7"></div>
<div class="a" style="left:518px;top:622px;width:1159.5px;height:1px;background:#d6d5d7"></div>
<div class="a" style="left:518px;top:665px;width:1159.5px;height:1px;background:#d6d5d7"></div>
<div class="a" style="left:518px;top:707px;width:1159.5px;height:1px;background:#d6d5d7"></div>
<div class="a" style="left:518px;top:750px;width:1159.5px;height:1px;background:#d6d5d7"></div>
<div class="a" style="left:518px;top:792px;width:1159.5px;height:1px;background:#d6d5d7"></div>
<div class="a" style="left:518px;top:835px;width:1159.5px;height:1px;background:#d6d5d7"></div>
<div class="a" style="left:518px;top:877px;width:1159.5px;height:1px;background:#d6d5d7"></div>
<div class="a" style="left:518px;top:920px;width:1159.5px;height:1px;background:#d6d5d7"></div>
<div class="a" style="left:518px;top:962px;width:1159.5px;height:1px;background:#d6d5d7"></div>
<div class="a" style="left:518px;top:1005px;width:1159.5px;height:1px;background:#d6d5d7"></div>
<div class="a" style="left:518px;top:1047px;width:1159.5px;height:1px;background:#d6d5d7"></div>
<div class="a" style="left:518px;top:1090px;width:1159.5px;height:1px;background:#d6d5d7"></div>
<div class="a" style="left:517.5px;top:494px;width:1px;height:597px;background:#d6d5d7"></div>
<div class="a" style="left:700.5px;top:494px;width:1px;height:597px;background:#d6d5d7"></div>
<div class="a" style="left:864.0px;top:494px;width:1px;height:597px;background:#d6d5d7"></div>
<div class="a" style="left:1316.5px;top:494px;width:1px;height:597px;background:#d6d5d7"></div>
<div class="a" style="left:1394.5px;top:537px;width:1px;height:554px;background:#d6d5d7"></div>
<div class="a" style="left:1466.5px;top:537px;width:1px;height:554px;background:#d6d5d7"></div>
<div class="a" style="left:1540.0px;top:494px;width:2px;height:597px;background:#d6d5d7"></div>
<div class="a" style="left:1677.0px;top:494px;width:1px;height:597px;background:#d6d5d7"></div>
</div>
</body></html>
